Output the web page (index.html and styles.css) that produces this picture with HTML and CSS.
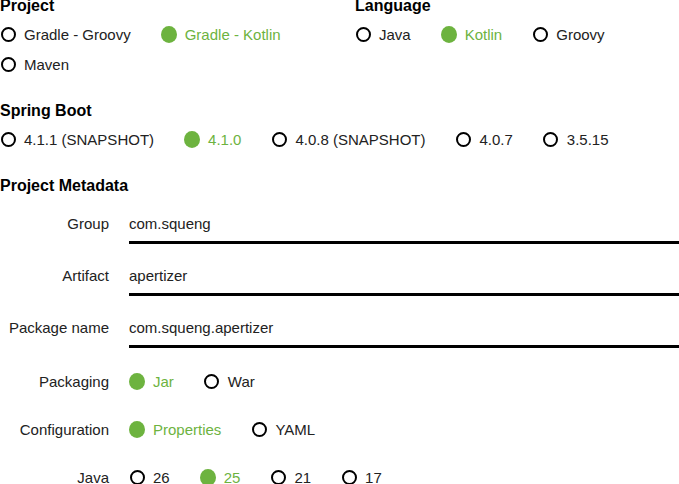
FILE: index.html
```html
<!DOCTYPE html>
<html lang="en">
<head>
    <meta charset="UTF-8">
    <meta name="viewport" content="width=device-width, initial-scale=1.0">
    <title>Spring Initializr</title>
    <link rel="stylesheet" href="styles.css">
</head>
<body>
<div class="page">
    <div class="top-row">
        <section class="group project">
            <h2>Project</h2>
            <div class="options">
                <label class="option"><span class="radio"></span>Gradle - Groovy</label>
                <label class="option checked"><span class="radio"></span>Gradle - Kotlin</label>
                <label class="option"><span class="radio"></span>Maven</label>
            </div>
        </section>
        <section class="group language">
            <h2>Language</h2>
            <div class="options">
                <label class="option"><span class="radio"></span>Java</label>
                <label class="option checked"><span class="radio"></span>Kotlin</label>
                <label class="option"><span class="radio"></span>Groovy</label>
            </div>
        </section>
    </div>

    <section class="group">
        <h2>Spring Boot</h2>
        <div class="options">
            <label class="option"><span class="radio"></span>4.1.1 (SNAPSHOT)</label>
            <label class="option checked"><span class="radio"></span>4.1.0</label>
            <label class="option"><span class="radio"></span>4.0.8 (SNAPSHOT)</label>
            <label class="option"><span class="radio"></span>4.0.7</label>
            <label class="option"><span class="radio"></span>3.5.15</label>
        </div>
    </section>

    <section class="group">
        <h2>Project Metadata</h2>
        <div class="fields">
            <div class="field">
                <label class="field-label" for="group">Group</label>
                <input class="text-input" id="group" type="text" value="com.squeng">
            </div>
            <div class="field">
                <label class="field-label" for="artifact">Artifact</label>
                <input class="text-input" id="artifact" type="text" value="apertizer">
            </div>
            <div class="field last-text">
                <label class="field-label" for="package">Package name</label>
                <input class="text-input" id="package" type="text" value="com.squeng.apertizer">
            </div>

            <div class="field choice">
                <span class="field-label">Packaging</span>
                <div class="options">
                    <label class="option checked"><span class="radio"></span>Jar</label>
                    <label class="option"><span class="radio"></span>War</label>
                </div>
            </div>
            <div class="field choice">
                <span class="field-label">Configuration</span>
                <div class="options">
                    <label class="option checked"><span class="radio"></span>Properties</label>
                    <label class="option"><span class="radio"></span>YAML</label>
                </div>
            </div>
            <div class="field choice">
                <span class="field-label">Java</span>
                <div class="options">
                    <label class="option"><span class="radio"></span>26</label>
                    <label class="option checked"><span class="radio"></span>25</label>
                    <label class="option"><span class="radio"></span>21</label>
                    <label class="option"><span class="radio"></span>17</label>
                </div>
            </div>
        </div>
    </section>
</div>
</body>
</html>
```

FILE: styles.css
```css
body {
    font-family: "Liberation Sans", Arial, sans-serif;
    font-size: 15px;
    color: #222;
    margin: 0;
    padding: 0;
    background-color: #fff;
    overflow: hidden;
}
.page {
    margin-top: -4px;
    width: 679px;
}
h2 {
    font-size: 16px;
    font-weight: bold;
    line-height: 20px;
    margin: 0 0 3px;
    color: #000;
}
.top-row {
    display: flex;
    align-items: flex-start;
}
.project { width: 355px; }
.language { flex: 1; }
.group + .group { margin-top: 22px; }
.top-row + .group { margin-top: 22px; }
.top-row .group + .group { margin-top: 0; }

.options {
    display: flex;
    flex-wrap: wrap;
}
.option {
    display: flex;
    align-items: center;
    height: 30px;
    margin-right: 30px;
    cursor: pointer;
}
.radio {
    width: 16px;
    height: 16px;
    margin-right: 8px;
    display: flex;
    align-items: center;
    justify-content: center;
}
.radio::before {
    content: "";
    width: 11px;
    height: 11px;
    border: 2px solid #000;
    border-radius: 50%;
}
.option.checked { color: #6db33f; }
.option.checked .radio::before {
    width: 17px;
    height: 17px;
    border: 0;
    background-color: #6db33f;
}

.fields { padding-top: 12px; }
.field {
    display: flex;
    align-items: baseline;
    margin-bottom: 19px;
}
.field.last-text { margin-bottom: 18px; }
.field-label {
    flex: 0 0 109px;
    padding-right: 20px;
    text-align: right;
}
.text-input {
    flex: 1;
    min-width: 0;
    box-sizing: border-box;
    height: 33px;
    padding: 0 0 5px;
    border: 0;
    border-bottom: 3px solid #000;
    outline: none;
    font-family: inherit;
    font-size: 15px;
    color: #222;
    background: transparent;
}
.field.choice {
    align-items: center;
    height: 30px;
    margin-bottom: 18px;
}
```
